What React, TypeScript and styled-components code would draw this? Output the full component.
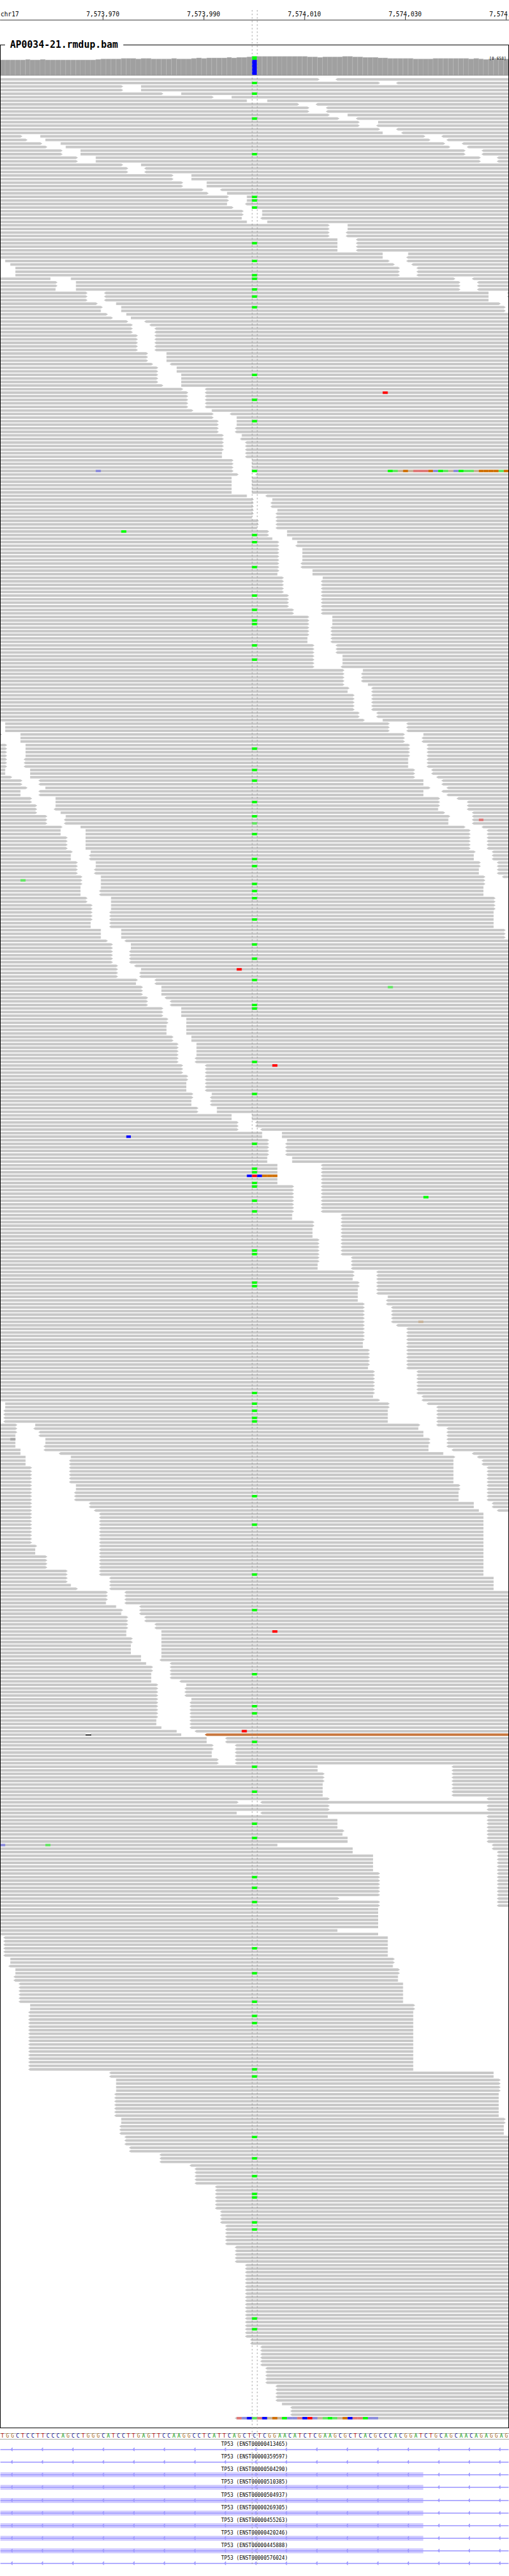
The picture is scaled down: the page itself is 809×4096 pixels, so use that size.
import React from "react";
import styled, { createGlobalStyle } from "styled-components";

const GlobalStyle = createGlobalStyle`
  body {
    margin: 0;
    background: #fff;
    color: #000;
    font-family: "DejaVu Sans Mono", monospace;
  }
`;

const BASE_WIDTH = 9.9;
const BASES = 101;
const ROW_PITCH = 7;
const ROW_HEIGHT = 5;
const FIRST_ROW = 154;
const COVERAGE_FLOOR = 148;

const baseX = (base: number) => Math.round(base * BASE_WIDTH);

const RULER_MARKS = [
  { x: 202, label: "7,573,970" },
  { x: 400, label: "7,573,990" },
  { x: 598, label: "7,574,010" },
  { x: 796, label: "7,574,030" },
  { x: 994, label: "7,574,050" },
];

/* Runs of equal coverage: number of bases, top of the bars. */
const COVERAGE: [number, number][] = [
  [5, 118], [1, 117], [2, 118], [1, 117], [10, 118], [1, 117], [4, 116], [3, 115],
  [1, 116], [2, 115], [4, 116], [1, 115], [3, 116], [1, 115], [1, 114], [1, 115],
  [4, 114], [1, 113], [1, 114], [2, 113], [1, 112], [11, 111], [2, 112], [1, 113],
  [4, 112], [2, 111], [2, 112], [3, 113], [2, 114], [5, 115], [4, 116], [7, 115],
  [1, 116], [1, 115], [1, 116], [1, 117], [5, 116],
];

/*
 * Pile-up rows as "count gap gap". A gap names the base where one read ends
 * and the base where the next begins; > and < are strand arrows, | a flat end.
 */
const PILEUP = `
1 63>67<;1 75>79<;2 24>28|;1 32>36|;1 42>46|;1 49|53|;1 59>63<;2 61>65<;1 65>69|;1 67>71<
1 71>75|;1 71>75<;1 75>79<;1 76|80<;1 4>8| 84>88<;1 5>9| 85>89<;1 8>12| 88>92<;1 9>13| 89>93<
2 12>16| 92>96<;2 15>19| 95>99<;1 24>28|;2 25>29<;2 34>38|;2 36>41|;1 40>44<;1 41>45|;2 45>49|
1 45|49<;1 46>50|;2 48>52|;1 48|52<;1 49|53|;2 65>69|;2 65>69<;4 67|71<;1 76|81|;1 76|81<
1 0|1| 77>81<;1 0|2| 78>82<;3 0|3| 79>83<;1 10|14| 90>94<;2 11>15| 91>95<;1 11|15| 91>95<
2 17>21< 97|101<;1 17>21< 97|101|;1 19>23| 99>101|;1 20>24| 100>101|;1 20|24| 100>101|
1 21>25|;1 22>26|;1 25>29<;1 26>30<;2 26>31<;5 27>31<;3 29>33|;1 30>34<;2 31>35|;3 31>36|
1 32>36|;1 36>41<;5 37>41<;1 38>42|;1 42>46<;1 42>47|;2 43>47|;2 43>47<;1 44>48|;1 44>48<
3 44>49<;2 44|49<;4 46>50|;1 47>51<;5 46|50|;1 49|53<;1 50>54|;2 50>54<;1 50>55|;1 50>55<
1 50|55<;2 51>55<;1 51|55<;2 53>57|;1 54|58|;1 55>59|;1 55>59<;4 55>60|;2 55>60<;1 55>62|
1 55|62|;1 56>64|;4 56>64<;4 57>64<;2 58>64<;3 61>66|;3 61>66<;2 61|66<;3 62>67<;3 62>68|
1 62>68<;1 68>72|;3 68>72<;1 68>73|;1 69>74<;1 69|74<;5 70>74<;2 71>75<;1 72>76|
3 0|1| 77>81<;1 0>4| 80>84|;2 0|4| 80>84<;4 1>5| 81>85<;3 1>5< 81|85<;2 1|6| 82>86<
1 2>6| 82>87<;2 4>8< 84|88<;1 5>9| 85>89<;1 4|8< 84|88<;1 4|8< 84|89<;1 6>11| 87>91<
1 6>11| 87>93<;1 7>11| 87>93<;1 7>11< 87|93<;1 7>12| 88>94<;1 9>13| 89>94<;2 9>13< 89|94<
1 12>16| 92>96<;2 12|17| 93>97<;4 13>17| 93>97<;1 14>18| 94>98<;2 14|18< 94|98<
2 15>19| 95>99<;2 15>19< 95|99<;1 16>20| 96>100<;2 16>20| 96>101|;1 16|20| 96|101|
2 16|20< 96|101|;2 17>22| 98>101|;2 18>22| 98>101|;3 18>22< 98|101|;2 18|22< 98|101|
3 20|24| 100>101|;1 21>25<;2 22>26|;4 22>26<;1 23>27<;1 23>28|;2 23>28<;1 27>31<;1 27|31<
3 28>32|;1 29>33<;2 29>34<;3 32>36|;2 33>37|;3 33|37|;2 34>38|;4 35>39|;2 35>39<;3 36>41<
2 37>41<;3 37|41<;1 38>42|;1 38>42<;2 38|42<;2 39>43|;2 46|50|;2 47>51<;1 47>52<;2 52|56|
1 53>57|;4 53>57<;2 53|58|;6 55|64<;8 58>64<;2 58|68<;2 62>68<;3 62|68<;5 63>68<;2 63>70<
2 63|70<;2 70>75<;1 70|75<;2 71>75<;2 71|75<;1 71|77|;1 71|77<;1 72>77<;5 72>78<;1 72>79<
4 72>81<;2 72|81<;5 73>81<;1 73|81<;7 74>83<;1 74|84<;1 75>84<;1 0|1| 77>85<;1 0|1| 77>87<
4 0|1< 77|87<;1 3>7| 83>87<;1 3>7< 83|89<;1 3>8< 84|89<;1 3|8< 84|89<;2 3|9| 85>89<
1 3|9< 85|89<;1 4|9< 85|90<;1 4|12< 88|94<;1 5|14| 90>95<;2 5|14< 90|96<;5 6>14< 90|97<
2 6>15| 91>97<;3 6>15< 91|97<;2 6>18< 94|98<;1 6>19< 95|99<;9 6>20< 96|101|;1 7>20< 96|101|
2 7|20< 96|101|;4 9>20< 96|101|;2 13>20< 96|101|;2 13>22< 98|101|;1 14|22< 98|101|
1 15>22< 98|101|;3 21>25<;1 21|25<;1 23|28<;1 24>28<;1 24|28<;2 25>29<;2 25>31<;2 25|32|
2 26>32|;3 26|32|;1 28|32|;1 28|32<;1 29|34<;2 30>34<;2 30|34<;1 30|36<;1 31>37|;3 31>37<
1 31>38|;5 31>38<;2 31|38<;1 32|38<;1 35|39<;1 17|18| 36|101|;2 41|45<;2 42>47<;2 42|47<
2 43>47<;2 63|90<;3 64>90<;4 64|90<;1 65>97<;1 47>52<;2 65>97<;1 47|52<;1 65|97<;3 67|97<
1 68>97<;1 68|97<;2 69|97<;1 55|98<;1 70|98<;1 70|99<;5 74|99<;7 75>99<;1 67>99<;2 75>99<
6 75|101|;1 67|101|;1 75|101|;6 0|1< 77|101|;2 0|2| 78>101|;1 0|2< 78|101|;2 0|3| 79>101|
2 0|3< 79|101|;6 0|4< 80|101|;2 0|6| 82>101|;17 0|6< 82|101|;2 0|22< 98|101|
4 0|23| 99>101|;7 0|23< 99|101|;2 0|24| 100>101|;3 0|24< 100|101|;3 0|25<;2 0|26<;3 0|32<
1 0|38<;5 0|39<;7 0|43<;4 0|44<;6 0|45<;5 0|47<;21 0|49<;2 0|50<;6 0|52<;5 0|53<;5 0|55<
1 0|56|;3 0|58<;1 0|47<
`;

const COLORS: Record<string, string> = {
  A: "#00ff00",
  a: "#64e664",
  C: "#0000ff",
  c: "#8c8cdc",
  G: "#d17105",
  g: "#c8b49b",
  T: "#ff0000",
  t: "#e07878",
  n: "#a9a9a9",
};

/* Rows whose read carries an A at the centred position. */
const VARIANT_ROWS = [
  1, 4, 11, 21, 33, 34, 36, 46, 51, 55, 56, 59, 61, 64, 83, 90, 96, 110, 128, 130, 137, 145,
  149, 152, 153, 159, 163, 188, 194, 197, 203, 207, 212, 219, 221, 226, 228, 230, 236, 243,
  247, 253, 260, 261, 276, 285, 299, 306, 307, 310, 311, 315, 318, 329, 330, 338, 339, 369,
  372, 374, 376, 377, 398, 406, 420, 430, 448, 457, 459, 467, 474, 481, 490, 494, 505, 508,
  512, 525, 532, 540, 544, 546, 559, 561, 578, 584, 589, 594, 595, 602, 604, 629, 632,
];

/* Other mismatches: row, first base, one letter per base. */
const MISMATCHES: [number, number, string][] = [
  [88, 76, "T"],
  [110, 19, "c"],
  [110, 77, "AagGgtttGcAagcAaagGGGGaG"],
  [127, 24, "A"],
  [208, 95, "t"],
  [209, 50, "a"],
  [225, 4, "a"],
  [250, 47, "T"],
  [255, 77, "a"],
  [277, 54, "T"],
  [297, 25, "C"],
  [308, 49, "CTCGGG"],
  [314, 84, "A"],
  [349, 83, "g"],
  [382, 2, "n"],
  [436, 54, "T"],
  [464, 48, "T"],
  [496, 0, "c"],
  [496, 9, "a"],
  [657, 47, "tcCatCgGgAcctCTcgaAagGCttAcc"],
];

const DISCORDANT = { row: 465, start: 41 };
const DELETION = { row: 465, base: 17 };

const SEQUENCE =
  "TGGCTCCTTCCCAGCCTGGGCATCCTTGAGTTCCAAGGCCTCATTCAGCTCTCGGAACATCTCGAAGCGCTCACGCCCACGGATCTGCAGCAACAGAGGAG";

const TRANSCRIPTS = [
  { id: "ENST00000413465", exon: false },
  { id: "ENST00000359597", exon: false },
  { id: "ENST00000504290", exon: true },
  { id: "ENST00000510385", exon: true },
  { id: "ENST00000504937", exon: true },
  { id: "ENST00000269305", exon: true },
  { id: "ENST00000455263", exon: true },
  { id: "ENST00000420246", exon: true },
  { id: "ENST00000445888", exon: true },
  { id: "ENST00000576024", exon: false },
];

const rowY = (row: number) => FIRST_ROW + ROW_PITCH * row;

function readPath(start: number, startArrow: boolean, end: number, endArrow: boolean, y: number) {
  const x0 = baseX(start);
  const x1 = baseX(end);
  const mid = y + ROW_HEIGHT / 2;
  const bottom = y + ROW_HEIGHT;
  const head = startArrow ? `M${x0 - 4} ${mid}L${x0} ${y}` : `M${x0} ${y}`;
  const tip = endArrow ? `L${x1} ${y}L${x1 + 4} ${mid}L${x1} ${bottom}` : `L${x1} ${y}L${x1} ${bottom}`;
  return `${head}${tip}L${x0} ${bottom}Z`;
}

function rowPath(gaps: string[], row: number) {
  let start = 0;
  let startArrow = false;
  let d = "";
  for (const gap of gaps) {
    const [, left, leftMark, right, rightMark] = gap.match(/(\d+)([>|])(\d+)([<|])/)!;
    const endArrow = leftMark === ">";
    if (Number(left) > start || endArrow) {
      d += readPath(start, startArrow, Number(left), endArrow, rowY(row));
    }
    start = Number(right);
    startArrow = rightMark === "<";
  }
  if (start < BASES || startArrow) {
    d += readPath(start, startArrow, BASES, false, rowY(row));
  }
  return d;
}

const READ_ROWS: string[] = [];
for (const entry of PILEUP.trim().split(/[;\n]/)) {
  const [count, ...gaps] = entry.split(" ");
  for (let i = 0; i < Number(count); i++) {
    READ_ROWS.push(rowPath(gaps, READ_ROWS.length));
  }
}

const COVERAGE_TOPS = COVERAGE.flatMap(([count, top]) => Array<number>(count).fill(top));

const Browser = styled.main`
  position: relative;
  width: 100%;
  padding-bottom: 16px;
  overflow: hidden;
`;

const Drawing = styled.svg`
  display: block;
  width: 100%;
  height: auto;
`;

const Ruler = styled.header`
  padding-bottom: 22px;
`;

const RulerText = styled.text<{ $anchor?: string }>`
  font-size: 12px;
  text-anchor: ${(p) => p.$anchor ?? "start"};
`;

const RangeText = styled.text`
  font-size: 8px;
  text-anchor: end;
`;

const Track = styled.fieldset`
  min-width: 0;
  margin: 0;
  padding: 0;
  border: 1px solid #000;
`;

const TrackName = styled.legend`
  margin-left: 7px;
  padding: 0 8px;
  font-size: 15px;
  font-weight: bold;
  line-height: 24px;
`;

const Sequence = styled.div`
  display: grid;
  grid-template-columns: repeat(${BASES}, 1fr);
  margin-top: 8px;
  border-top: 1px solid #a5aaa5;
  border-bottom: 1px solid #a5aaa5;
`;

const BASE_COLORS: Record<string, string> = {
  A: "#009600",
  C: "#000087",
  G: "#a56414",
  T: "#aa0000",
};

const Base = styled.span<{ $letter: string }>`
  color: ${(p) => BASE_COLORS[p.$letter]};
  font-size: 8px;
  line-height: 8px;
  text-align: center;
`;

const Genes = styled.section`
  display: flex;
  flex-direction: column;
`;

const GeneLabel = styled.p`
  margin: 0;
  padding-top: 4px;
  font-size: 8px;
  line-height: 8px;
  text-align: center;
`;

const CenterGuide = styled.svg`
  position: absolute;
  top: 16px;
  left: 0;
  width: 100%;
  height: calc(100% - 35px);
  pointer-events: none;
`;

function RulerTrack() {
  return (
    <Ruler>
      <Drawing viewBox="0 0 1000 46">
        <RulerText x={1} y={32}>chr17</RulerText>
        {RULER_MARKS.map((mark) => (
          <g key={mark.x}>
            <RulerText x={mark.x} y={32} $anchor="middle">{mark.label}</RulerText>
            <rect x={mark.x} y={32} width={1} height={7} />
          </g>
        ))}
        <rect x={0} y={39} width={1000} height={1} />
      </Drawing>
    </Ruler>
  );
}

function Coverage() {
  return (
    <g>
      {COVERAGE_TOPS.map((top, base) => {
        const x = baseX(base);
        const width = baseX(base + 1) - x;
        if (base === 50) {
          return (
            <g key={base}>
              <rect x={x} y={111} width={width} height={7} fill="#00ff00" />
              <rect x={x} y={118} width={width} height={30} fill="#0000ff" />
            </g>
          );
        }
        return (
          <g key={base}>
            <rect x={x} y={top} width={width} height={COVERAGE_FLOOR - top} fill="#b0b0b0" />
            <rect x={x} y={top + 1} width={width - 1} height={COVERAGE_FLOOR - top - 1} fill="#a0a0a0" />
          </g>
        );
      })}
      <rect x={0} y={COVERAGE_FLOOR} width={1000} height={1} fill="#777" />
      <RangeText x={995} y={118}>[0-658]</RangeText>
    </g>
  );
}

function Reads() {
  const deletionX = baseX(DELETION.base);
  return (
    <g>
      <g fill="#c8c8c8">
        {READ_ROWS.map((d, row) => (
          <path key={row} d={d} />
        ))}
      </g>
      <path
        d={readPath(DISCORDANT.start, true, BASES, false, rowY(DISCORDANT.row))}
        fill="#c8773f"
      />
      <rect x={deletionX} y={rowY(DELETION.row) + 2} width={11} height={2} />
      {VARIANT_ROWS.map((row) => (
        <rect key={row} x={495} y={rowY(row)} width={10} height={ROW_HEIGHT} fill={COLORS.A} />
      ))}
      {MISMATCHES.flatMap(([row, first, letters]) =>
        letters.split("").map((letter, i) => (
          <rect
            key={`${row}-${first + i}`}
            x={baseX(first + i)}
            y={rowY(row)}
            width={baseX(first + i + 1) - baseX(first + i)}
            height={ROW_HEIGHT}
            fill={COLORS[letter]}
          />
        )),
      )}
    </g>
  );
}

function Transcript({ id, exon }: { id: string; exon: boolean }) {
  const arrows = Array.from({ length: 17 }, (_, i) => 21 + 60 * i);
  return (
    <article>
      <GeneLabel>TP53 ({id})</GeneLabel>
      <Drawing viewBox="0 0 1000 10">
        {exon && <rect x={0} y={0} width={832} height={10} fill="#d2cdff" />}
        <g fill="#a09bff">
          <rect x={0} y={4} width={1000} height={2} />
          {arrows.map((x) => (
            <path key={x} d={`M${x - 1} 5L${x + 2} 1L${x + 3} 1L${x + 3} 8L${x + 2} 8Z`} />
          ))}
        </g>
      </Drawing>
    </article>
  );
}

export default function App() {
  return (
    <>
      <GlobalStyle />
      <Browser>
        <RulerTrack />
        <Track>
          <TrackName>AP0034-21.rmdup.bam</TrackName>
          <Drawing viewBox="1 103 998 4671">
            <Coverage />
            <Reads />
          </Drawing>
        </Track>
        <Sequence>
          {SEQUENCE.split("").map((letter, i) => (
            <Base key={i} $letter={letter}>{letter}</Base>
          ))}
        </Sequence>
        <Genes>
          {TRANSCRIPTS.map((t) => (
            <Transcript key={t.id} id={t.id} exon={t.exon} />
          ))}
        </Genes>
        <CenterGuide viewBox="0 20 1000 5022" preserveAspectRatio="none">
          <g stroke="#8c8c8c" strokeWidth={1} strokeDasharray="3 4">
            <line x1={495.5} x2={495.5} y1={20} y2={5042} />
            <line x1={505.5} x2={505.5} y1={20} y2={5042} />
          </g>
        </CenterGuide>
      </Browser>
    </>
  );
}
